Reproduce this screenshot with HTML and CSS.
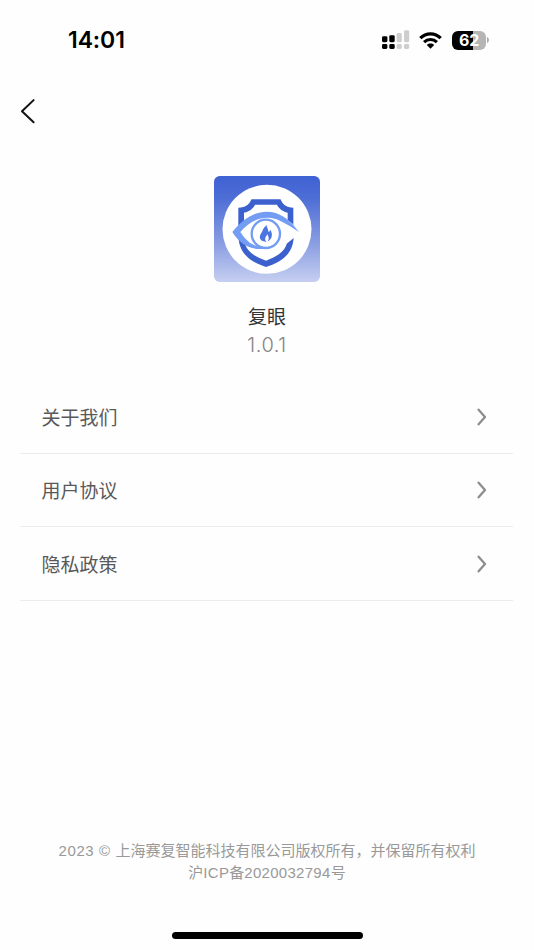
FILE: index.html
```html
<!DOCTYPE html>
<html lang="zh-CN">
<head>
<meta charset="utf-8">
<title>复眼</title>
<link rel="stylesheet" href="styles.css">
</head>
<body>
<div class="screen">
  <header class="status">
    <span class="time">14:01</span>
    <div class="indicators">
      <svg class="signal" viewBox="0 0 28 20">
        <g fill="#000"><rect x="0" y="6.2" width="5.4" height="6" rx="1.4"/><rect x="7.3" y="5.2" width="5.4" height="7" rx="1.4"/><rect x="0" y="14" width="5.4" height="5" rx="1.4"/><rect x="7.3" y="14" width="5.4" height="5" rx="1.4"/></g>
        <g fill="#cecece"><rect x="14.6" y="3" width="5.2" height="9.2" rx="1.4"/><rect x="22" y="0.3" width="5.2" height="11.9" rx="1.4"/><rect x="14.6" y="14" width="5.2" height="5" rx="1.4"/><rect x="22" y="14" width="5.2" height="5" rx="1.4"/></g>
      </svg>
      <svg class="wifi" viewBox="0 0 23 17">
        <g fill="none" stroke="#000" stroke-width="3.2"><path d="M1.300 6.200C7 .5 16 .5 21.700 6.200"/><path d="M5.100 10.100C8.700 6.600 14.300 6.600 17.900 10.100"/></g>
        <path d="M7.800 12.900C9.800 11 13.200 11 15.200 12.900L11.500 16.700Z"/>
      </svg>
      <div class="battery"><span class="level">62</span><svg class="cap" viewBox="0 0 2 6"><path d="M0 0C2.600 1 2.600 5 0 6Z" fill="#aaa"/></svg></div>
    </div>
  </header>
  <nav class="nav">
    <svg class="back" viewBox="0 0 16 26"><path d="M13.600 2.100L2 13.300L13.600 24.200" fill="none" stroke="#111" stroke-width="2" stroke-linecap="round" stroke-linejoin="round"/></svg>
  </nav>
  <section class="brand">
    <svg class="logo" viewBox="20 16 318 318">
      <defs><linearGradient id="sky" x1="0" y1="0" x2="0" y2="1"><stop offset="0" stop-color="#3f62d3"/><stop offset=".2" stop-color="#4d6dd6"/><stop offset=".65" stop-color="#8c9fe2"/><stop offset="1" stop-color="#c6cff1"/></linearGradient></defs>
      <rect x="20" y="16" width="318" height="318" rx="17" fill="url(#sky)"/>
      <circle cx="179" cy="176" r="133.500" fill="#fff"/>
      <path fill="none" stroke="#3c60ce" stroke-width="17" d="M101.500 165V119Q128 117 138 94H214Q224 117 249.500 119V165"/>
      <path fill="#3c60ce" d="M93 195L111 211C116 240 137 256 176 270C214 256 233 239 238 219L259 202C256 246 229 272 176 289C124 272 95 246 93 195Z"/>
      <path fill="#fff" d="M88 184C125 125 197 111 256 160L260 184C240 208 209 226 185 233C140 232 111 220 88 184Z"/>
      <path fill="#739cf3" d="M75 184C120 128 165 115 205 127C236 137 255 159 275 184C243 163 223 151 205 145C169 134 131 147 99 184C113 206 128 219 145 225Q160 230 188 232C139 243 101 226 75 184Z"/>
      <circle cx="175.500" cy="189.500" r="42.500" fill="#fff" stroke="#739cf3" stroke-width="7"/>
      <path fill="#4c75df" d="M180 163C164 173 168 180 162 187C155 196 156 207 166 211L177 214C170 204 175 198 181 191C182 199 188 202 181 212C195 206 197 190 189 177Q188 184 183 183C184 175 176 171 180 163Z"/>
    </svg>
    <h1 class="name">复眼</h1>
    <p class="version">1.0.1</p>
  </section>
  <main class="menu">
    <a class="row"><span>关于我们</span><svg class="chevron" viewBox="0 0 10 18"><path d="M1.600 1.700L8 9L1.600 16.300"/></svg></a>
    <a class="row"><span>用户协议</span><svg class="chevron" viewBox="0 0 10 18"><path d="M1.600 1.700L8 9L1.600 16.300"/></svg></a>
    <a class="row"><span>隐私政策</span><svg class="chevron" viewBox="0 0 10 18"><path d="M1.600 1.700L8 9L1.600 16.300"/></svg></a>
  </main>
  <footer class="legal">
    <p><span class="year">2023 © </span>上海赛复智能科技有限公司版权所有，并保留所有权利</p>
    <p class="icp">沪<span class="code">ICP</span>备<span class="code">2020032794</span>号</p>
  </footer>
  <div class="home"></div>
</div>
</body>
</html>
```
FILE: styles.css
```css
* { box-sizing: border-box; }
body { margin: 0; background: #fefefe; font-family: "Liberation Sans", "Noto Sans CJK SC", sans-serif; }
h1, p { margin: 0; font-weight: 400; }
svg { display: block; }
.screen { height: 950px; display: flex; flex-direction: column; overflow: hidden; }
.status { height: 80px; padding: 0 45px 0 68px; display: flex; align-items: center; justify-content: space-between; }
.time { font: 600 23px/28px Inter, sans-serif; letter-spacing: -.1px; }
.indicators { display: flex; align-items: center; }
.signal { width: 28px; height: 20px; margin-right: 9px; }
.wifi { width: 23px; height: 17px; margin-right: 10px; }
.battery { display: flex; align-items: center; gap: 1px; }
.level { width: 34px; height: 19px; border-radius: 6px; background: linear-gradient(90deg, #000 62%, #b5b5b5 62%); color: #fff; font: 700 16px/19px Inter, sans-serif; letter-spacing: -.3px; text-align: center; }
.cap { width: 2px; height: 6px; }
.nav { height: 96px; padding: 18px 20px; }
.back { width: 16px; height: 26px; }
.brand { height: 204px; display: flex; flex-direction: column; align-items: center; }
.logo { width: 106px; height: 106px; }
.name { margin-top: 22px; font-size: 19px; line-height: 28px; color: #333; }
.version { font: 300 20px/27px Inter, sans-serif; letter-spacing: .6px; color: #858585; }
.menu { margin: 0 21px 0 20px; }
.row { height: 73.6px; padding: 0 26px 0 21.500px; display: flex; align-items: center; justify-content: space-between; border-bottom: 1px solid #ececec; font-size: 19px; color: #595959; }
.chevron { width: 10px; height: 18px; margin-top: 1px; fill: none; stroke: #8d8d8d; stroke-width: 2.3; stroke-linecap: round; stroke-linejoin: round; }
.legal { margin-top: auto; padding-bottom: 48px; font-size: 15px; line-height: 22px; color: #999; text-align: center; white-space: nowrap; }
.year { letter-spacing: .6px; }
.code { letter-spacing: .3px; }
.home { width: 191px; height: 7px; margin: 0 auto 11px; border-radius: 4px; background: #000; }
```
